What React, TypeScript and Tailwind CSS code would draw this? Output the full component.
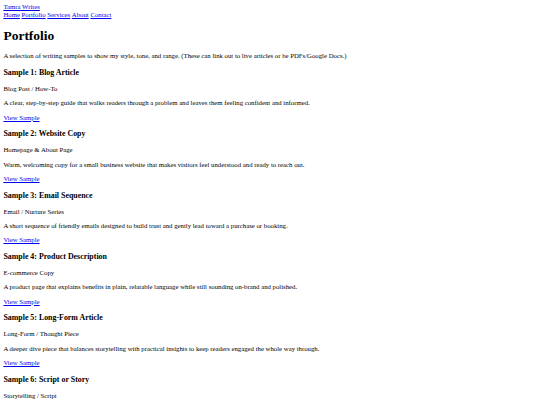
const samples = [
  {
    title: 'Sample 1: Blog Article',
    kind: 'Blog Post / How-To',
    blurb: 'A clear, step-by-step guide that walks readers through a problem and leaves them feeling confident and informed.',
  },
  {
    title: 'Sample 2: Website Copy',
    kind: 'Homepage & About Page',
    blurb: 'Warm, welcoming copy for a small business website that makes visitors feel understood and ready to reach out.',
  },
  {
    title: 'Sample 3: Email Sequence',
    kind: 'Email / Nurture Series',
    blurb: 'A short sequence of friendly emails designed to build trust and gently lead toward a purchase or booking.',
  },
  {
    title: 'Sample 4: Product Description',
    kind: 'E-commerce Copy',
    blurb: 'A product page that explains benefits in plain, relatable language while still sounding on-brand and polished.',
  },
  {
    title: 'Sample 5: Long-Form Article',
    kind: 'Long-Form / Thought Piece',
    blurb: 'A deeper dive piece that balances storytelling with practical insights to keep readers engaged the whole way through.',
  },
  {
    title: 'Sample 6: Script or Story',
    kind: 'Storytelling / Script',
    blurb: 'A short script or story piece that shows voice, pacing and the ability to hold attention from start to finish.',
  },
]

const link = 'text-[#0000ee] underline'

export default function App() {
  return (
    <div className="bg-white text-black p-[3.4px] text-[6.75px] leading-[7.7px] font-['Liberation_Serif','Times_New_Roman',serif]">
      <header>
        <a href="#" className={link}>Tamra Writes</a>
        <nav className="flex gap-[1.7px]">
          <a href="#" className={link}>Home</a>
          <a href="#" className={link}>Portfolio</a>
          <a href="#" className={link}>Services</a>
          <a href="#" className={link}>About</a>
          <a href="#" className={link}>Contact</a>
        </nav>
      </header>
      <main>
        <h1 className="text-[13.5px] leading-[15.5px] font-bold my-[9px]">Portfolio</h1>
        <p className="my-[6.7px]">
          A selection of writing samples to show my style, tone, and range. (These can link out to live articles or be PDFs/Google Docs.)
        </p>
        {samples.map(s => (
          <section key={s.title}>
            <h3 className="text-[7.9px] leading-[9.1px] font-bold my-[7.9px]">{s.title}</h3>
            <p className="my-[6.7px]">{s.kind}</p>
            <p className="my-[6.7px]">{s.blurb}</p>
            <p className="my-[6.7px]">
              <a href="#" className={link}>View Sample</a>
            </p>
          </section>
        ))}
      </main>
    </div>
  )
}
